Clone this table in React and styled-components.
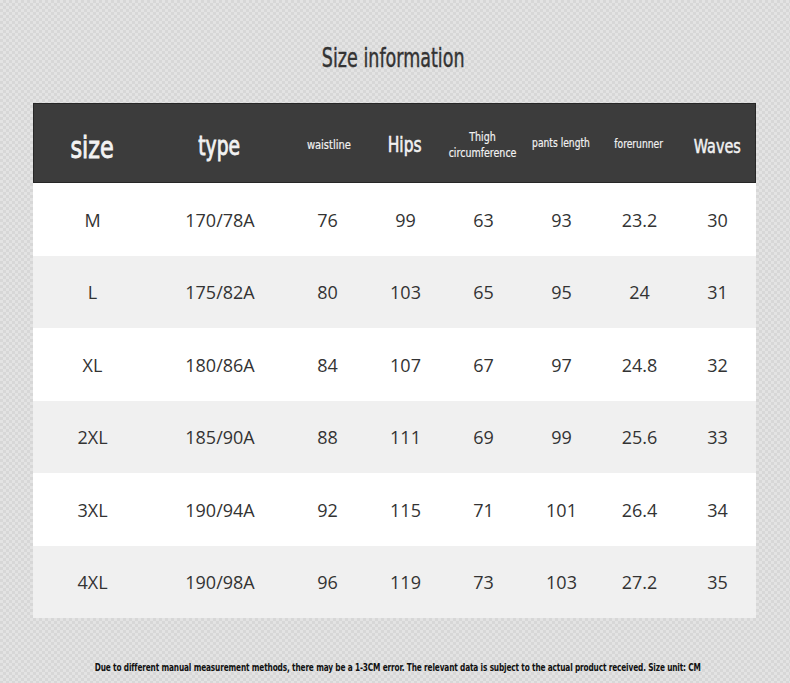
import React from "react";
import styled, { createGlobalStyle } from "styled-components";

const Global = createGlobalStyle`
  html, body { margin: 0; padding: 0; }
  body {
    width: 790px;
    height: 683px;
    overflow: hidden;
    background-color: #dedede;
    background-image: conic-gradient(#d7d7d7 25%, #e3e3e3 25% 50%, #d7d7d7 50% 75%, #e3e3e3 75%);
    background-size: 6px 6px;
  }
`;

const Page = styled.div`
  width: 790px;
  height: 683px;
  display: flex;
  flex-direction: column;
  align-items: center;
`;

const Title = styled.h1`
  margin: 40px 0 0 -4px;
  height: 63px;
  font-family: "DejaVu Sans Condensed", "Liberation Sans Narrow", sans-serif;
  font-weight: 400;
  font-size: 26px;
  line-height: 36px;
  color: #333;
  -webkit-text-stroke: 0.4px #333;
  transform: scaleX(0.75);
`;

const Table = styled.div`
  width: 723px;
  display: grid;
  grid-template-columns: 118px 137px repeat(6, 78px);
  margin-right: 1px;
`;

const Head = styled.div`
  display: contents;
`;

const HeadCell = styled.div`
  height: 80px;
  background: #3c3c3c;
  border-top: 1px solid #262626;
  border-bottom: 1px solid #262626;
  box-sizing: border-box;
  display: flex;
  align-items: center;
  justify-content: center;
  text-align: center;
  color: #f2f2f2;
  font-family: "DejaVu Sans Condensed", "Liberation Sans Narrow", sans-serif;
  font-size: ${(p) => p.$size}px;
  font-weight: 400;
  -webkit-text-stroke: ${(p) => p.$stroke || 0}px #f2f2f2;
  line-height: 1.3;
  padding-top: ${(p) => p.$pt || 0}px;
  padding-left: ${(p) => p.$pl || 0}px;
  &:first-child { border-left: 1px solid #262626; }
  &:nth-child(8) { border-right: 1px solid #262626; }
`;

const HeadText = styled.span`
  display: inline-block;
  transform: scaleX(${(p) => p.$sx});
  white-space: nowrap;
`;

const Cell = styled.div`
  height: ${(p) => p.$h}px;
  background: ${(p) => (p.$alt ? "#f0f0f0" : "#ffffff")};
  display: flex;
  align-items: center;
  justify-content: center;
  font-family: "Open Sans", "Noto Sans", sans-serif;
  font-size: 18px;
  color: #333;
  padding-left: 1px;
  box-sizing: border-box;
`;

const Note = styled.p`
  margin: 43px 0 0 6px;
  font-family: "DejaVu Sans Condensed", "Liberation Sans Narrow", sans-serif;
  font-size: 11px;
  font-weight: 700;
  color: #111;
  white-space: nowrap;
  transform: scaleX(0.745);
  letter-spacing: -0.2px;
`;

const headers = [
  { t: "size", s: 31, st: 0.9, sx: 0.8, pt: 8 },
  { t: "type", s: 26, st: 0.8, sx: 0.8, pt: 8 },
  { t: "waistline", s: 13, st: 0.2, sx: 0.85, pt: 4, pl: 3 },
  { t: "Hips", s: 21, st: 0.6, sx: 0.82, pt: 5 },
  { t: ["Thigh", "circumference"], s: 12, st: 0.2, sx: 0.88, pt: 5 },
  { t: "pants length", s: 12, st: 0.2, sx: 0.85, pt: 2 },
  { t: "forerunner", s: 12, st: 0.2, sx: 0.85, pt: 4 },
  { t: "Waves", s: 20, st: 0.5, sx: 0.8, pt: 5, pl: 2 },
];

const rows = [
  ["M", "170/78A", "76", "99", "63", "93", "23.2", "30"],
  ["L", "175/82A", "80", "103", "65", "95", "24", "31"],
  ["XL", "180/86A", "84", "107", "67", "97", "24.8", "32"],
  ["2XL", "185/90A", "88", "111", "69", "99", "25.6", "33"],
  ["3XL", "190/94A", "92", "115", "71", "101", "26.4", "34"],
  ["4XL", "190/98A", "96", "119", "73", "103", "27.2", "35"],
];

const heights = [73, 72, 73, 72, 73, 72];

export default function App() {
  return (
    <>
      <Global />
      <Page>
        <Title>Size information</Title>
        <Table>
          <Head>
            {headers.map((h, i) => (
              <HeadCell key={i} $size={h.s} $stroke={h.st} $pt={h.pt} $pl={h.pl}>
                <HeadText $sx={h.sx}>
                  {Array.isArray(h.t) ? (
                    <>
                      {h.t[0]}
                      <br />
                      {h.t[1]}
                    </>
                  ) : (
                    h.t
                  )}
                </HeadText>
              </HeadCell>
            ))}
          </Head>
          {rows.map((r, ri) =>
            r.map((v, ci) => (
              <Cell key={ri + "-" + ci} $alt={ri % 2 === 1} $h={heights[ri]}>
                {v}
              </Cell>
            ))
          )}
        </Table>
        <Note>
          Due to different manual measurement methods, there may be a 1-3CM error. The relevant data is subject to the actual product received. Size unit: CM
        </Note>
      </Page>
    </>
  );
}
